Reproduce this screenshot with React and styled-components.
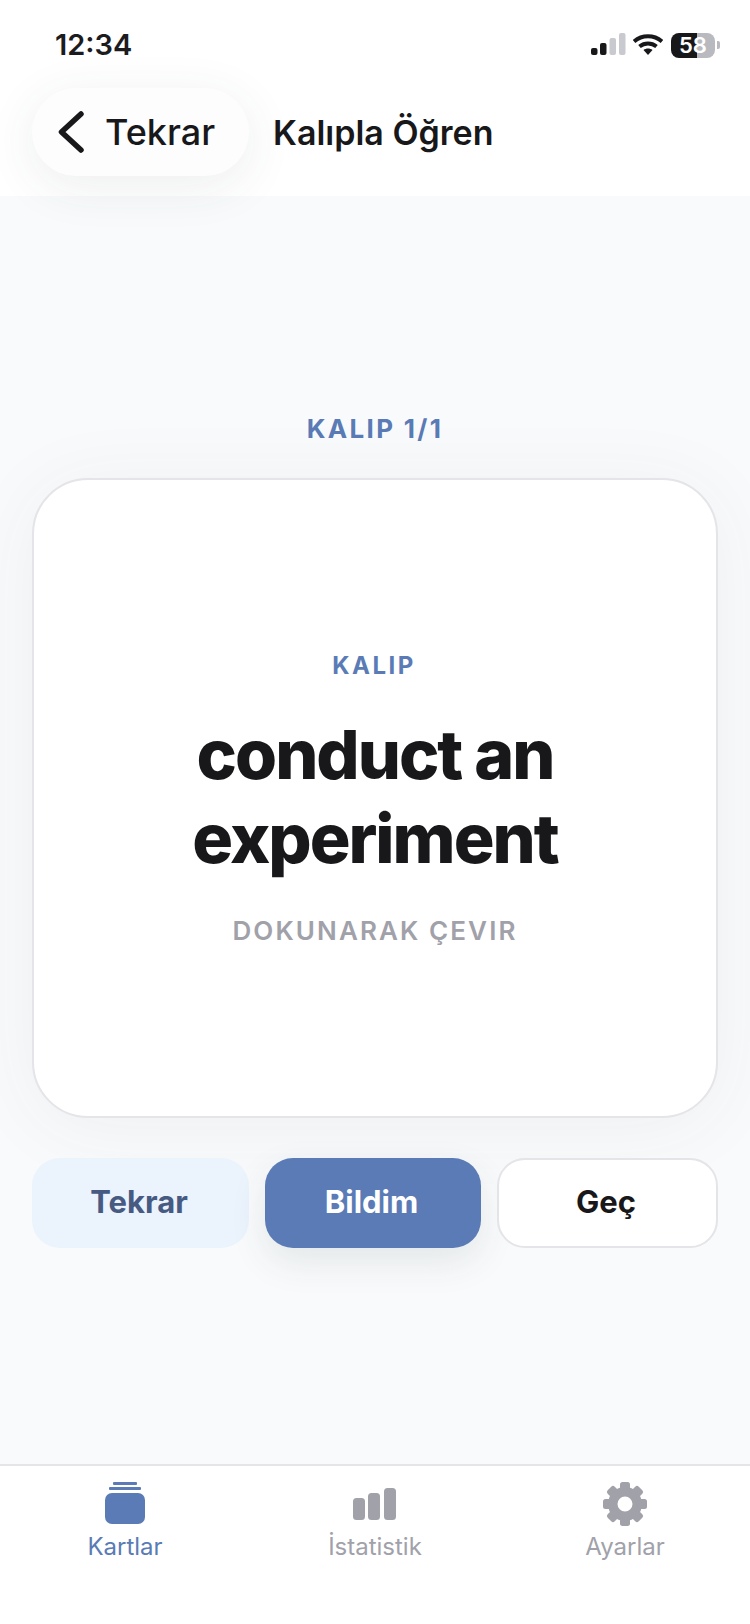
import React from "react";
import styled, { createGlobalStyle } from "styled-components";

const Global = createGlobalStyle`
  html, body { margin: 0; padding: 0; background: #fff; }
  body { font-family: Inter, "Liberation Sans", sans-serif; }
  * { box-sizing: border-box; }
`;

const Page = styled.div`
  width: 750px;
  height: 1624px;
  display: flex;
  flex-direction: column;
  overflow: hidden;
  background: #f8fafb;
  color: #18181b;
`;

const Top = styled.header`
  height: 196px;
  background: #fff;
  flex: none;
  display: flex;
  flex-direction: column;
  position: relative;
  z-index: 1;
`;

const StatusBar = styled.div`
  height: 88px;
  padding: 27px 30px 0 55px;
  display: flex;
  align-items: flex-start;
  justify-content: space-between;
`;

const Clock = styled.span`
  font-size: 29px;
  line-height: 36px;
  font-weight: 600;
  color: #1c1c1f;
`;

const StatusIcons = styled.div`
  display: flex;
  align-items: center;
  gap: 0;
  height: 36px;
`;

const NavRow = styled.div`
  display: flex;
  align-items: center;
  padding: 0 32px;
  gap: 24px;
`;

const BackButton = styled.div`
  width: 217px;
  height: 88px;
  border-radius: 44px;
  background: #fdfdfe;
  box-shadow: 0 10px 50px rgba(60, 70, 80, 0.09);
  display: flex;
  align-items: center;
  padding-left: 26px;
  gap: 21px;
  font-size: 36px;
  font-weight: 500;
`;

const PageTitle = styled.h1`
  margin: 0;
  font-size: 34px;
  font-weight: 600;
`;

const Main = styled.main`
  flex: 1;
  display: flex;
  flex-direction: column;
  align-items: center;
  justify-content: center;
  padding: 2px 32px 0;
  gap: 34px;
`;

const Counter = styled.div`
  font-size: 26px;
  line-height: 30px;
  font-weight: 700;
  letter-spacing: 2.3px;
  color: #5a7bb5;
`;

const Card = styled.section`
  width: 686px;
  height: 640px;
  background: #fff;
  border: 2px solid #e4e4e9;
  border-radius: 56px;
  box-shadow: 0 8px 80px rgba(60, 70, 80, 0.06);
  display: flex;
  flex-direction: column;
  align-items: center;
  justify-content: center;
  text-align: center;
`;

const Eyebrow = styled.div`
  font-size: 24px;
  line-height: 29px;
  font-weight: 700;
  letter-spacing: 2.5px;
  margin-right: 2px;
  color: #5a7bb5;
`;

const Phrase = styled.div`
  margin: 32px 0 36px;
  font-size: 68px;
  line-height: 84px;
  font-weight: 800;
  letter-spacing: -2px;
  color: #18181b;
  width: 500px;
`;

const Hint = styled.div`
  font-size: 26px;
  line-height: 30px;
  font-weight: 600;
  letter-spacing: 2.1px;
  color: #a1a1aa;
`;

const Actions = styled.div`
  width: 686px;
  display: grid;
  grid-template-columns: 217px 216px 1fr;
  gap: 16px;
  margin-top: 6px;
`;

const Action = styled.div`
  height: 90px;
  border-radius: 28px;
  padding: 0 3px 3px 0;
  display: flex;
  align-items: center;
  justify-content: center;
  font-size: 31px;
  font-weight: 700;
  background: ${(p) => p.$bg};
  color: ${(p) => p.$fg};
  border: ${(p) => (p.$outlined ? "2px solid #e4e4e9" : "none")};
  box-shadow: ${(p) => (p.$raised ? "0 14px 36px rgba(60, 70, 80, 0.1)" : "none")};
`;

const TabBar = styled.nav`
  flex: none;
  height: 160px;
  background: #fff;
  border-top: 2px solid #e4e4e9;
  display: grid;
  grid-template-columns: repeat(3, 1fr);
  padding: 14px 0 0;
`;

const Tab = styled.div`
  display: flex;
  flex-direction: column;
  align-items: center;
  gap: 3px;
  color: ${(p) => (p.$active ? "#5a7bb5" : "#a1a1aa")};
  font-size: 24px;
  line-height: 32px;
  font-weight: 400;
`;

const TabIcon = styled.svg`
  width: 48px;
  height: 48px;
  display: block;
  fill: currentColor;
`;

function Signal() {
  return (
    <svg width="35" height="24" viewBox="0 0 35 24" style={{ marginRight: 7 }}>
      <rect x="0" y="15" width="6.5" height="7" rx="2" fill="#18181b" />
      <rect x="9" y="10" width="6.5" height="12" rx="2" fill="#18181b" />
      <rect x="18.5" y="5" width="6.5" height="17" rx="2" fill="#c9c9d0" />
      <rect x="28" y="0" width="6.5" height="22" rx="2" fill="#c9c9d0" />
    </svg>
  );
}

function Wifi() {
  return (
    <svg width="30" height="22" viewBox="0 0 30 22" style={{ marginRight: 8 }}>
      <path d="M1 7.5C9 .5 21 .5 29 7.5" fill="none" stroke="#18181b" strokeWidth="4" />
      <path d="M6.5 12.5C11.5 8.5 18.5 8.5 23.5 12.5" fill="none" stroke="#18181b" strokeWidth="4" />
      <path d="M10.5 16 15 21l4.5-5c-2.5-2-6.5-2-9 0z" fill="#18181b" />
    </svg>
  );
}

const Battery = styled.div`
  width: 44px;
  height: 25px;
  border-radius: 8px;
  background: linear-gradient(90deg, #18181b 58%, #b9b9c0 58%);
  color: #fff;
  font-size: 22px;
  line-height: 25px;
  font-weight: 600;
  text-align: center;
`;

const BatteryCap = styled.div`
  width: 3px;
  height: 8px;
  margin-left: 2px;
  border-radius: 0 2px 2px 0;
  background: #b9b9c0;
`;

const GEAR_TEETH = [0, 45, 90, 135, 180, 225, 270, 315];

export default function App() {
  return (
    <Page>
      <Global />
      <Top>
        <StatusBar>
          <Clock>12:34</Clock>
          <StatusIcons>
            <Signal />
            <Wifi />
            <Battery>58</Battery>
            <BatteryCap />
          </StatusIcons>
        </StatusBar>
        <NavRow>
          <BackButton>
            <svg width="26" height="42" viewBox="0 0 26 42" fill="none">
              <path d="M23 3 3.5 21 23 39" stroke="#18181b" strokeWidth="5.5" strokeLinecap="round" strokeLinejoin="round" />
            </svg>
            <span>Tekrar</span>
          </BackButton>
          <PageTitle>Kalıpla Öğren</PageTitle>
        </NavRow>
      </Top>
      <Main>
        <Counter>KALIP 1/1</Counter>
        <Card>
          <Eyebrow>KALIP</Eyebrow>
          <Phrase>conduct an experiment</Phrase>
          <Hint>DOKUNARAK ÇEVIR</Hint>
        </Card>
        <Actions>
          <Action $bg="#ebf3fd" $fg="#465a82">Tekrar</Action>
          <Action $bg="#5a7bb5" $fg="#fff" $raised>Bildim</Action>
          <Action $bg="#fff" $fg="#18181b" $outlined>Geç</Action>
        </Actions>
      </Main>
      <TabBar>
        <Tab $active>
          <TabIcon viewBox="0 0 48 48">
            <rect x="4" y="13" width="40" height="31" rx="7" />
            <rect x="8" y="7" width="32" height="3" rx="1" />
            <rect x="12" y="2" width="24" height="3" rx="1" />
          </TabIcon>
          Kartlar
        </Tab>
        <Tab>
          <TabIcon viewBox="0 0 48 48">
            <rect x="2" y="18" width="12" height="22" rx="3.5" />
            <rect x="17" y="13" width="12" height="27" rx="3.5" />
            <rect x="33" y="8" width="12" height="32" rx="3.5" />
          </TabIcon>
          İstatistik
        </Tab>
        <Tab>
          <TabIcon viewBox="0 0 48 48">
            <circle cx="24" cy="24" r="12.25" fill="none" stroke="currentColor" strokeWidth="9.5" />
            {GEAR_TEETH.map((a) => (
              <rect key={a} x="19" y="2" width="10" height="10" rx="2.5" transform={`rotate(${a} 24 24)`} />
            ))}
          </TabIcon>
          Ayarlar
        </Tab>
      </TabBar>
    </Page>
  );
}
